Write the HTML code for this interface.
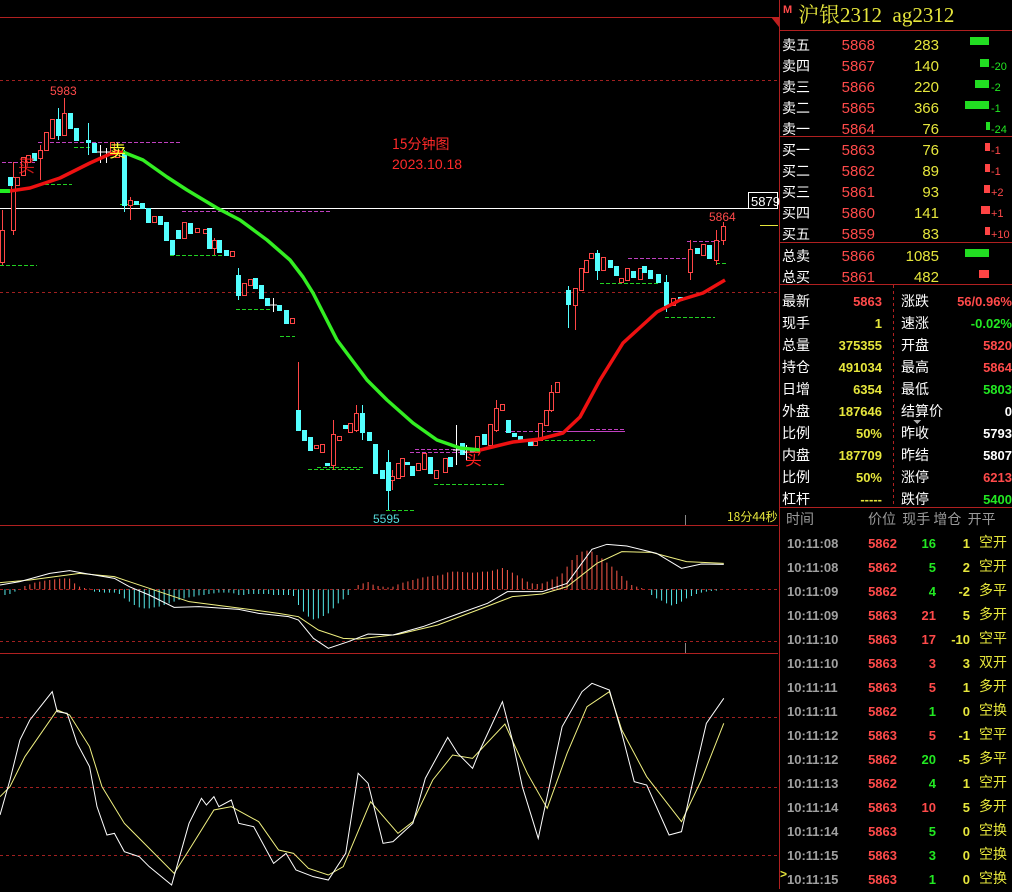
<!DOCTYPE html>
<html><head><meta charset="utf-8"><style>
body{margin:0;background:#000;width:1012px;height:889px;overflow:hidden;position:relative;font-family:"Liberation Sans","Noto Sans CJK SC",sans-serif}
.a{position:absolute;white-space:nowrap;line-height:1}
.r{color:#ff4a4a}.y{color:#e6e63c}.g{color:#22e822}.w{color:#fff}.gr{color:#9a9a9a}
.lab{font-family:"Noto Sans CJK SC",sans-serif;color:#fff;font-size:14px}
.n{font-size:15px}
.b{font-weight:bold;font-size:13px}
</style></head><body>
<svg width="1012" height="889" style="position:absolute;left:0;top:0">
<g shape-rendering="crispEdges">
<line x1="0" y1="17.5" x2="778" y2="17.5" stroke="#b02020"/>
<line x1="0" y1="80.5" x2="778" y2="80.5" stroke="#a02020" stroke-dasharray="3,3"/>
<line x1="0" y1="292.5" x2="778" y2="292.5" stroke="#a02020" stroke-dasharray="3,3"/>
<line x1="0" y1="208.5" x2="748" y2="208.5" stroke="#fff"/>
<rect x="748.5" y="192.5" width="29" height="16" fill="none" stroke="#fff"/>
<line x1="760" y1="225.5" x2="778" y2="225.5" stroke="#e6e63c"/>
<line x1="0" y1="525.5" x2="778" y2="525.5" stroke="#b02020"/>
<line x1="0" y1="589.5" x2="778" y2="589.5" stroke="#a02020" stroke-dasharray="3,3"/>
<line x1="0" y1="641.5" x2="778" y2="641.5" stroke="#a02020" stroke-dasharray="3,3"/>
<line x1="0" y1="653.5" x2="778" y2="653.5" stroke="#b02020"/>
<line x1="0" y1="717.5" x2="778" y2="717.5" stroke="#a02020" stroke-dasharray="3,3"/>
<line x1="0" y1="787.5" x2="778" y2="787.5" stroke="#a02020" stroke-dasharray="3,3"/>
<line x1="0" y1="855.5" x2="778" y2="855.5" stroke="#a02020" stroke-dasharray="3,3"/>
<line x1="685.5" y1="515" x2="685.5" y2="525" stroke="#888"/>
<line x1="685.5" y1="643" x2="685.5" y2="653" stroke="#888"/>
<line x1="779.5" y1="0" x2="779.5" y2="889" stroke="#b02020"/>
<g fill="none" stroke-dasharray="4,2">
<path d="M38 142.5H180M2 162.5H35M182 211.5H330M415 449.5H470M410 452.5H480M590 429.5H625M505 431.5H625M555 431.5H625M628 258.5H690M687 241.5H720" stroke="#c040c0"/>
<path d="M0 265.5H37M45 184.5H72M74 147.5H90M120 204.5H145M170 255.5H225M236 309.5H270M280 336.5H295M308 469.5H360M386 510.5H415M434 484.5H505M515 440.5H595M317 467.5H365M600 283.5H660M665 317.5H715M716 263.5H727" stroke="#22d022"/>
</g>
</g>
<g stroke-width="1" shape-rendering="crispEdges">
<g stroke="#ff4646" fill="#000">
<path d="M2.5 210V265M13.5 162V235M40.5 145V180M64.5 98V135M130.5 197V220M214.5 238V255M298.5 362V430M333.5 420V470M356.5 405V432M392.5 470V490M496.5 400V432M551.5 385V412M575.5 288V330M690.5 240V280M716.5 230V265M723.5 222V245" fill="none"/>
<rect x="0.5" y="230.5" width="4" height="32"/><rect x="11.5" y="177.5" width="4" height="53"/>
<rect x="15.5" y="177.5" width="4" height="8"/><rect x="21.5" y="157.5" width="4" height="18"/>
<rect x="26.5" y="155.5" width="4" height="7"/><rect x="38.5" y="150.5" width="4" height="8"/>
<rect x="44.5" y="132.5" width="4" height="18"/><rect x="50.5" y="119.5" width="4" height="19"/>
<rect x="62.5" y="113.5" width="4" height="22"/><rect x="110.5" y="142.5" width="4" height="10"/>
<rect x="115.5" y="150.5" width="4" height="7"/><rect x="128.5" y="200.5" width="4" height="5"/>
<rect x="152.5" y="216.5" width="4" height="6"/><rect x="182.5" y="222.5" width="4" height="16"/>
<rect x="195.5" y="228.5" width="4" height="4"/><rect x="203.5" y="229.5" width="4" height="4"/>
<rect x="212.5" y="240.5" width="4" height="8"/><rect x="230.5" y="251.5" width="4" height="5"/>
<rect x="242.5" y="283.5" width="4" height="12"/><rect x="248.5" y="279.5" width="4" height="6"/>
<rect x="290.5" y="318.5" width="4" height="5"/><rect x="314.5" y="445.5" width="4" height="3"/>
<rect x="320.5" y="444.5" width="4" height="8"/><rect x="331.5" y="434.5" width="4" height="31"/>
<rect x="337.5" y="436.5" width="4" height="4"/><rect x="348.5" y="423.5" width="4" height="9"/>
<rect x="354.5" y="413.5" width="4" height="17"/><rect x="390.5" y="476.5" width="4" height="4"/>
<rect x="396.5" y="463.5" width="4" height="15"/><rect x="400.5" y="458.5" width="4" height="18"/>
<rect x="416.5" y="463.5" width="4" height="7"/><rect x="422.5" y="453.5" width="4" height="16"/>
<rect x="434.5" y="470.5" width="4" height="8"/><rect x="443.5" y="458.5" width="4" height="14"/>
<rect x="475.5" y="436.5" width="4" height="16"/><rect x="488.5" y="424.5" width="4" height="21"/>
<rect x="494.5" y="408.5" width="4" height="22"/><rect x="500.5" y="404.5" width="4" height="6"/>
<rect x="533.5" y="441.5" width="4" height="4"/><rect x="538.5" y="423.5" width="4" height="17"/>
<rect x="544.5" y="410.5" width="4" height="15"/><rect x="549.5" y="392.5" width="4" height="18"/>
<rect x="555.5" y="382.5" width="4" height="10"/><rect x="573.5" y="288.5" width="4" height="17"/>
<rect x="579.5" y="268.5" width="4" height="22"/><rect x="584.5" y="260.5" width="4" height="12"/>
<rect x="589.5" y="253.5" width="4" height="5"/><rect x="601.5" y="257.5" width="4" height="13"/>
<rect x="619.5" y="278.5" width="4" height="4"/><rect x="625.5" y="268.5" width="4" height="12"/>
<rect x="638.5" y="268.5" width="4" height="11"/><rect x="671.5" y="298.5" width="4" height="7"/>
<rect x="688.5" y="249.5" width="4" height="23"/><rect x="701.5" y="244.5" width="4" height="11"/>
<rect x="714.5" y="240.5" width="4" height="20"/><rect x="721.5" y="226.5" width="4" height="14"/>
</g>
<g fill="#54ffff" stroke="#54ffff">
<path d="M58.5 108V140M88.5 123V155M124.5 150V212M238.5 268V300M362.5 405V440M388.5 450V510M568.5 286V328M666.5 275V312M597.5 250V280" fill="none"/>
<rect x="8.5" y="177.5" width="4" height="8"/><rect x="32.5" y="153.5" width="4" height="7"/>
<rect x="56.5" y="119.5" width="4" height="16"/><rect x="68.5" y="113.5" width="4" height="15"/>
<rect x="74.5" y="128.5" width="4" height="12"/><rect x="86.5" y="140.5" width="4" height="2"/>
<rect x="92.5" y="143.5" width="4" height="9"/><rect x="122.5" y="152.5" width="4" height="53"/>
<rect x="134.5" y="201.5" width="4" height="3"/><rect x="140.5" y="203.5" width="4" height="5"/>
<rect x="146.5" y="208.5" width="4" height="14"/><rect x="158.5" y="216.5" width="4" height="8"/>
<rect x="164.5" y="222.5" width="4" height="18"/><rect x="170.5" y="240.5" width="4" height="14"/>
<rect x="176.5" y="230.5" width="4" height="8"/><rect x="188.5" y="223.5" width="4" height="10"/>
<rect x="207.5" y="228.5" width="4" height="20"/><rect x="217.5" y="240.5" width="4" height="12"/>
<rect x="224.5" y="250.5" width="4" height="5"/><rect x="236.5" y="275.5" width="4" height="20"/>
<rect x="253.5" y="278.5" width="4" height="10"/><rect x="259.5" y="285.5" width="4" height="13"/>
<rect x="265.5" y="298.5" width="4" height="7"/><rect x="277.5" y="305.5" width="4" height="5"/>
<rect x="284.5" y="310.5" width="4" height="13"/><rect x="296.5" y="410.5" width="4" height="20"/>
<rect x="302.5" y="430.5" width="4" height="10"/><rect x="308.5" y="437.5" width="4" height="13"/>
<rect x="325.5" y="463.5" width="4" height="2"/><rect x="343.5" y="425.5" width="4" height="3"/>
<rect x="360.5" y="413.5" width="4" height="19"/><rect x="367.5" y="432.5" width="4" height="8"/>
<rect x="373.5" y="444.5" width="4" height="29"/><rect x="380.5" y="470.5" width="4" height="8"/>
<rect x="386.5" y="462.5" width="4" height="28"/><rect x="405.5" y="462.5" width="4" height="2"/>
<rect x="410.5" y="466.5" width="4" height="9"/><rect x="428.5" y="457.5" width="4" height="16"/>
<rect x="448.5" y="457.5" width="4" height="9"/><rect x="460.5" y="443.5" width="4" height="11"/>
<rect x="470.5" y="448.5" width="4" height="3"/><rect x="482.5" y="434.5" width="4" height="10"/>
<rect x="506.5" y="420.5" width="4" height="12"/><rect x="512.5" y="433.5" width="4" height="3"/>
<rect x="518.5" y="436.5" width="4" height="4"/><rect x="528.5" y="441.5" width="4" height="4"/>
<rect x="566.5" y="290.5" width="4" height="14"/><rect x="595.5" y="253.5" width="4" height="17"/>
<rect x="608.5" y="260.5" width="4" height="7"/><rect x="614.5" y="266.5" width="4" height="9"/>
<rect x="631.5" y="271.5" width="4" height="6"/><rect x="642.5" y="266.5" width="4" height="6"/>
<rect x="648.5" y="270.5" width="4" height="8"/><rect x="656.5" y="274.5" width="4" height="8"/>
<rect x="664.5" y="282.5" width="4" height="23"/><rect x="678.5" y="297.5" width="4" height="3"/>
<rect x="695.5" y="248.5" width="4" height="5"/><rect x="707.5" y="245.5" width="4" height="13"/>
</g>
<path d="M100.5 145V163M97 152H104M106.5 148V163M103 152H110M273.5 298V312M270 305H277M456.5 425V465M453 450H460M466.5 445V460M463 452H470" stroke="#fff" fill="none"/>
</g>
<polyline points="0,191 10,191" fill="none" stroke="#22ee22" stroke-width="4"/>
<polyline points="10,191 30,188 60,178 90,163 110,154 123,152" fill="none" stroke="#ee1111" stroke-width="3.5" stroke-linejoin="round"/>
<polyline points="123,152 143,160 167,177 187,190 217,208 240,220 267,240 290,260 303,277 313,293 337,340 367,380 387,400 413,423 437,440 460,448 480,450" fill="none" stroke="#33ee22" stroke-width="3.5" stroke-linejoin="round"/>
<polyline points="480,450 513,442 540,439 563,433 580,417 600,380 623,343 657,312 680,300 703,293 725,280" fill="none" stroke="#ee1111" stroke-width="3.5" stroke-linejoin="round"/>
<text x="50" y="95" fill="#ff4a4a" font-size="12" font-family="Liberation Sans">5983</text>
<text x="109" y="157" fill="#ffff30" font-size="17" font-family="Noto Sans CJK SC">卖</text>
<text x="18" y="172" fill="#ff2020" font-size="17" font-family="Noto Sans CJK SC" opacity="0.8">买</text>
<text x="465" y="465" fill="#ff2020" font-size="17" font-family="Noto Sans CJK SC">买</text>
<text x="392" y="149" fill="#ff2a2a" font-size="14" font-family="Noto Sans CJK SC">15分钟图</text>
<text x="392" y="169" fill="#ff2a2a" font-size="14" font-family="Liberation Sans">2023.10.18</text>
<text x="709" y="221" fill="#ff4a4a" font-size="12" font-family="Liberation Sans">5864</text>
<text x="373" y="523" fill="#54d8d8" font-size="12" font-family="Liberation Sans">5595</text>
<text x="727" y="521" fill="#e6e63c" font-size="12" font-family="Noto Sans CJK SC">18分44秒</text>
<text x="751" y="206" fill="#fff" font-size="13" font-family="Liberation Sans">5879</text>
<path d="M771 17L779 17L779 27Z" fill="#c02020"/>
</svg>
<svg width="780" height="369" viewBox="0 0 1568 1107" preserveAspectRatio="none" style="position:absolute;left:0;top:520px">
<path vector-effect="non-scaling-stroke" stroke="#ff5a4a" stroke-width="1" fill="none" d="M50 208V198M60 208V193M70 208V188M80 208V185M90 208V182M100 208V180M110 208V178M120 208V176M130 208V175M140 208V176M150 208V190M160 208V200M170 208V204M180 208V206M720 208V195M730 208V190M740 208V186M750 208V194M760 208V198M770 208V200M780 208V202M790 208V200M800 208V193M810 208V188M820 208V184M830 208V180M840 208V176M850 208V172M860 208V170M870 208V168M880 208V166M890 208V164M900 208V157M910 208V155M920 208V155M930 208V156M940 208V157M950 208V158M960 208V157M970 208V155M980 208V155M990 208V152M1000 208V148M1010 208V144M1020 208V150M1030 208V158M1040 208V166M1050 208V175M1060 208V185M1070 208V190M1080 208V192M1090 208V190M1100 208V185M1110 208V178M1120 208V170M1130 208V160M1140 208V140M1150 208V120M1160 208V105M1170 208V95M1180 208V92M1190 208V95M1200 208V105M1210 208V115M1220 208V128M1230 208V140M1240 208V152M1250 208V168M1260 208V182M1270 208V195M1280 208V200M1290 208V204"/>
<path vector-effect="non-scaling-stroke" stroke="#54e8e8" stroke-width="1" fill="none" d="M10 208V225M20 208V222M30 208V215M190 208V215M200 208V216M210 208V218M220 208V218M230 208V218M240 208V222M250 208V235M260 208V245M270 208V255M280 208V262M290 208V265M300 208V265M310 208V262M320 208V260M330 208V255M340 208V250M350 208V245M360 208V240M370 208V235M380 208V232M390 208V230M400 208V226M410 208V225M420 208V222M430 208V220M440 208V218M450 208V218M460 208V218M470 208V220M480 208V225M490 208V225M500 208V222M510 208V222M520 208V222M530 208V222M540 208V222M550 208V225M560 208V225M570 208V225M580 208V225M590 208V228M600 208V255M610 208V275M620 208V290M630 208V298M640 208V295M650 208V288M660 208V280M670 208V265M680 208V250M690 208V238M700 208V225M1310 208V225M1320 208V235M1330 208V242M1340 208V250M1350 208V256M1360 208V252M1370 208V245M1380 208V235M1390 208V228M1400 208V222M1410 208V218M1420 208V215M1430 208V213M1440 208V212"/>
<polyline vector-effect="non-scaling-stroke" fill="none" stroke="#f0f080" stroke-width="1" points="0,188 60,180 160,160 230,170 300,205 380,245 470,262 560,280 600,290 640,330 690,355 720,357 800,343 880,315 960,270 1030,230 1090,222 1140,200 1200,130 1250,95 1310,97 1380,125 1455,130"/>
<polyline vector-effect="non-scaling-stroke" fill="none" stroke="#fff" stroke-width="1" points="0,195 40,185 100,160 140,152 170,160 230,175 260,200 300,225 350,262 400,260 480,268 520,280 580,290 600,300 630,355 660,385 700,365 740,342 790,345 850,320 920,282 980,250 1020,215 1090,215 1140,190 1190,88 1220,73 1260,78 1320,100 1370,145 1410,132 1455,133"/>
<polyline vector-effect="non-scaling-stroke" fill="none" stroke="#f0f080" stroke-width="1" points="0,830 20,800 50,710 115,570 140,585 180,680 205,800 250,910 350,1060 380,990 430,870 465,860 520,905 560,990 590,1000 620,1045 660,1065 690,1040 745,845 800,940 830,905 870,780 910,705 950,715 1015,612 1060,760 1100,865 1140,700 1180,560 1225,515 1250,630 1300,770 1370,905 1410,780 1455,610"/>
<polyline vector-effect="non-scaling-stroke" fill="none" stroke="#fff" stroke-width="1" points="0,885 20,780 40,660 60,600 105,515 115,575 135,580 155,670 180,740 195,860 215,945 230,940 250,995 280,1010 300,1040 345,1095 380,910 405,835 415,855 430,830 440,860 465,840 480,910 510,920 550,1030 575,1000 595,1050 630,1070 660,1080 695,1000 720,760 740,790 770,970 790,965 830,910 855,775 900,652 920,700 950,745 965,690 1010,545 1030,660 1050,800 1082,955 1130,620 1170,515 1190,490 1225,510 1250,640 1275,785 1300,795 1345,945 1370,935 1395,770 1420,610 1455,535"/>
</svg>
<svg width="233" height="889" style="position:absolute;left:779px;top:0" shape-rendering="crispEdges">
<line x1="0" y1="30.5" x2="233" y2="30.5" stroke="#b02020"/>
<line x1="0" y1="136.5" x2="233" y2="136.5" stroke="#b02020"/>
<line x1="0" y1="242.5" x2="233" y2="242.5" stroke="#b02020"/>
<line x1="0" y1="284.5" x2="233" y2="284.5" stroke="#b02020"/>
<line x1="0" y1="507.5" x2="233" y2="507.5" stroke="#b02020"/>
<line x1="114.5" y1="285" x2="114.5" y2="507" stroke="#b02020" stroke-dasharray="3,3"/>
<rect x="191" y="37" width="19" height="8" fill="#22dd22"/>
<rect x="201" y="59" width="9" height="8" fill="#22dd22"/>
<rect x="196" y="80" width="14" height="8" fill="#22dd22"/>
<rect x="186" y="101" width="24" height="8" fill="#22dd22"/>
<rect x="207" y="122" width="4" height="8" fill="#22dd22"/>
<rect x="206" y="143" width="5" height="8" fill="#ff4444"/>
<rect x="206" y="164" width="5" height="8" fill="#ff4444"/>
<rect x="205" y="185" width="6" height="8" fill="#ff4444"/>
<rect x="202" y="206" width="9" height="8" fill="#ff4444"/>
<rect x="206" y="227" width="5" height="8" fill="#ff4444"/>
<rect x="186" y="249" width="24" height="8" fill="#22dd22"/>
<rect x="200" y="270" width="10" height="8" fill="#ff4444"/>
<path d="M134 420L142 420L138 424Z" fill="#aaa"/>
</svg>
<div class="a r" style="left:783px;top:5px;font-size:11px;font-weight:bold">M</div>
<div class="a y" style="left:798px;top:5px;font-size:21px;font-family:'Liberation Serif','Noto Serif CJK SC',serif">沪银2312&nbsp;&nbsp;ag2312</div>
<div class="a lab" style="left:782px;top:35px;line-height:21px">卖五<br>卖四<br>卖三<br>卖二<br>卖一</div>
<div class="a lab" style="left:782px;top:140px;line-height:21px">买一<br>买二<br>买三<br>买四<br>买五</div>
<div class="a lab" style="left:782px;top:246px;line-height:21px">总卖<br>总买</div>
<div class="a r n" style="left:810px;width:65px;text-align:right;top:35px;line-height:21px">5868<br>5867<br>5866<br>5865<br>5864</div>
<div class="a r n" style="left:810px;width:65px;text-align:right;top:140px;line-height:21px">5863<br>5862<br>5861<br>5860<br>5859</div>
<div class="a r n" style="left:810px;width:65px;text-align:right;top:246px;line-height:21px">5866<br>5861</div>
<div class="a y n" style="left:880px;width:59px;text-align:right;top:35px;line-height:21px">283<br>140<br>220<br>366<br>76</div>
<div class="a y n" style="left:880px;width:59px;text-align:right;top:140px;line-height:21px">76<br>89<br>93<br>141<br>83</div>
<div class="a y n" style="left:880px;width:59px;text-align:right;top:246px;line-height:21px">1085<br>482</div>
<div class="a g" style="left:991px;top:57px;font-size:11px;line-height:21px">-20<br>-2<br>-1<br>-24</div>
<div class="a r" style="left:991px;top:141px;font-size:11px;line-height:21px">-1<br>-1<br>+2<br>+1<br>+10</div>
<div class="a lab" style="left:782px;top:290px;line-height:22px">最新<br>现手<br>总量<br>持仓<br>日增<br>外盘<br>比例<br>内盘<br>比例<br>杠杆</div>
<div class="a b" style="left:810px;width:72px;text-align:right;top:291px;line-height:22px"><span class="r">5863</span><br><span class="y">1<br>375355<br>491034<br>6354<br>187646<br>50%<br>187709<br>50%<br>-----</span></div>
<div class="a lab" style="left:901px;top:290px;line-height:22px">涨跌<br>速涨<br>开盘<br>最高<br>最低<br>结算价<br>昨收<br>昨结<br>涨停<br>跌停</div>
<div class="a b" style="left:940px;width:72px;text-align:right;top:291px;line-height:22px"><span class="r">56/0.96%</span><br><span class="g">-0.02%</span><br><span class="r">5820<br>5864</span><br><span class="g">5803</span><br><span class="w">0<br>5793<br>5807</span><br><span class="r">6213</span><br><span class="g">5400</span></div>
<div class="a lab gr" style="left:786px;top:512px;color:#9a9a9a">时间</div>
<div class="a lab" style="left:868px;top:512px;color:#9a9a9a">价位&nbsp;&nbsp;现手&nbsp;增仓&nbsp;&nbsp;开平</div>
<div class="a b gr" style="left:787px;top:532px;line-height:24px;color:#a0a0a0">10:11:08<br>10:11:08<br>10:11:09<br>10:11:09<br>10:11:10<br>10:11:10<br>10:11:11<br>10:11:11<br>10:11:12<br>10:11:12<br>10:11:13<br>10:11:14<br>10:11:14<br>10:11:15<br>10:11:15</div>
<div class="a y" style="left:780px;top:868px;font-size:12px;font-weight:bold">&gt;</div>
<div class="a b r" style="left:850px;width:47px;text-align:right;top:532px;line-height:24px">5862<br>5862<br>5862<br>5863<br>5863<br>5863<br>5863<br>5862<br>5863<br>5862<br>5862<br>5863<br>5863<br>5863<br>5863</div>
<div class="a b" style="left:900px;width:36px;text-align:right;top:532px;line-height:24px"><span class="g">16<br>5<br>4</span><br><span class="r">21<br>17<br>3<br>5</span><br><span class="g">1</span><br><span class="r">5</span><br><span class="g">20<br>4</span><br><span class="r">10</span><br><span class="g">5<br>3<br>1</span></div>
<div class="a b y" style="left:940px;width:30px;text-align:right;top:532px;line-height:24px">1<br>2<br>-2<br>5<br>-10<br>3<br>1<br>0<br>-1<br>-5<br>1<br>5<br>0<br>0<br>0</div>
<div class="a y" style="left:979px;top:530px;line-height:24px;font-size:14px;font-family:'Noto Sans CJK SC',sans-serif">空开<br>空开<br>多平<br>多开<br>空平<br>双开<br>多开<br>空换<br>空平<br>多平<br>空开<br>多开<br>空换<br>空换<br>空换</div>
</body></html>
